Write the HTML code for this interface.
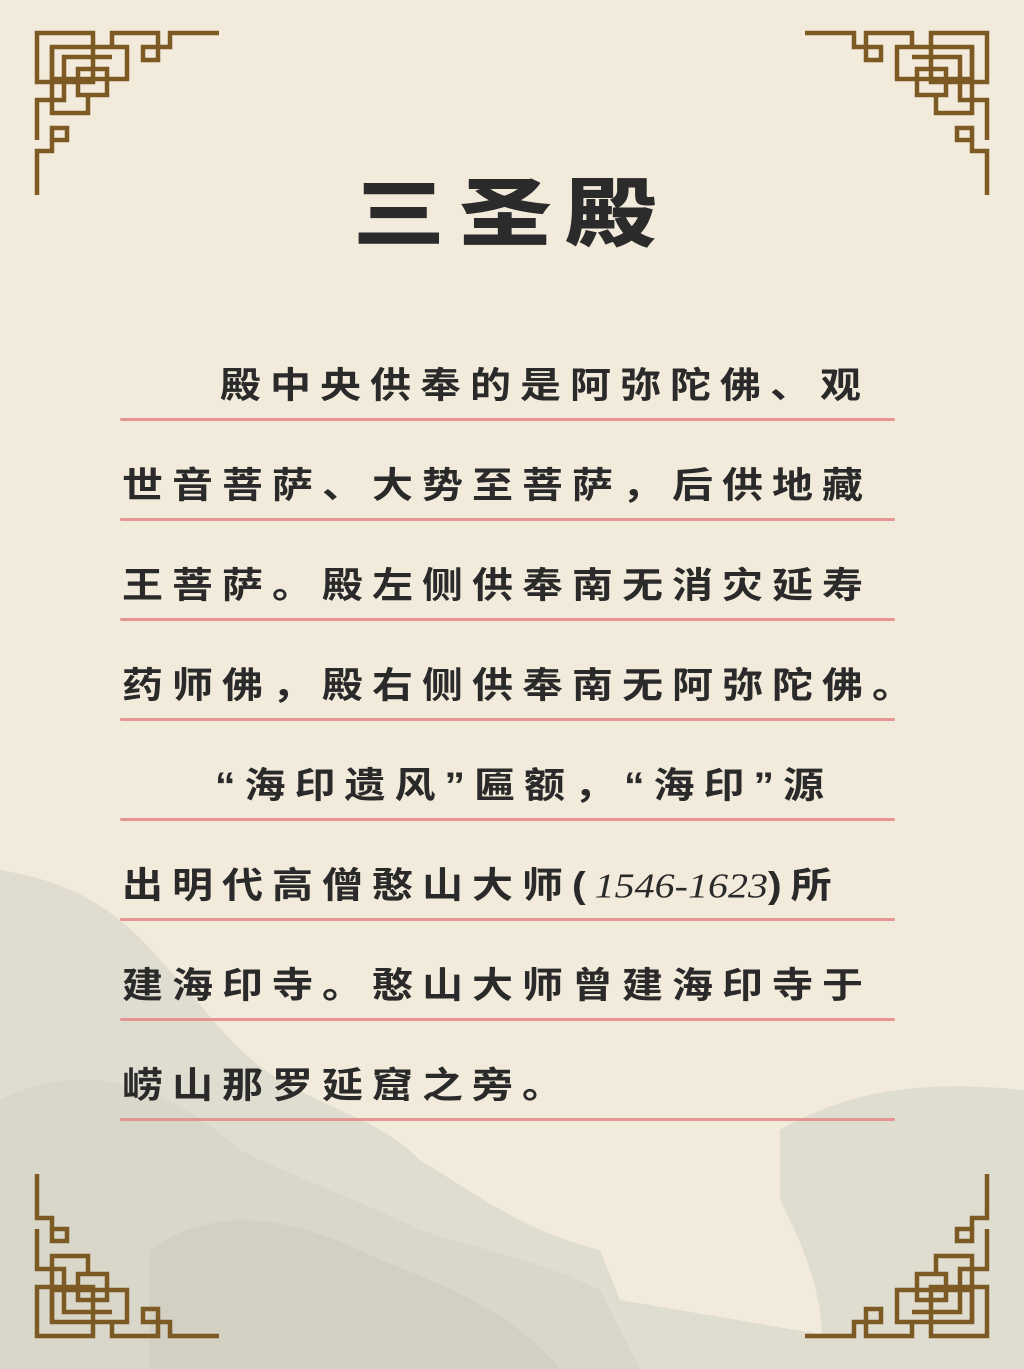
<!DOCTYPE html>
<html><head><meta charset="utf-8"><style>
html,body{margin:0;padding:0}
body{width:1024px;height:1369px;position:relative;overflow:hidden;background:#f2ebdb;font-family:"Liberation Sans","Noto Sans CJK SC",sans-serif}
.bg{position:absolute;left:0;top:0}
.title{position:absolute;left:0;width:1024px;top:160px;text-align:center;font-size:92px;font-weight:900;color:#2b2b2b;letter-spacing:14px;line-height:110px;transform:scaleY(0.82);font-family:"Liberation Sans","Noto Sans CJK SC",sans-serif}
.ln{position:absolute;left:122px;font-size:41px;font-weight:700;color:#2a2a2a;letter-spacing:9px;white-space:nowrap;line-height:50px;transform:scaleY(0.88);transform-origin:left center}
.rule{position:absolute;left:120px;width:775px;height:3px;background:#e38c8c;border-radius:2px;opacity:.9}
.num{font-family:"Liberation Serif",serif;font-style:italic;font-weight:400;letter-spacing:0;font-size:40px}
</style></head><body>
<svg class="bg" width="1024" height="1369" viewBox="0 0 1024 1369">
<g fill="#c9ccc4" opacity="0.45">
<path d="M0,870 C60,880 110,900 160,960 C200,1000 230,1050 280,1080 C330,1110 380,1120 420,1160 C470,1190 520,1230 600,1250 L620,1300 L1024,1369 L0,1369Z"/>
<path d="M0,1100 C80,1060 160,1080 240,1150 C300,1180 360,1200 420,1230 C480,1250 540,1260 600,1290 L640,1369 L0,1369Z" fill="#b9bfb6"/>
<path d="M780,1130 C850,1090 920,1080 1024,1090 L1024,1369 L820,1369 C830,1300 800,1240 780,1200Z"/>
<path d="M150,1250 C220,1200 300,1220 380,1260 C460,1290 520,1320 560,1369 L150,1369Z" fill="#aab1a8"/>
</g>
<g fill="none" stroke="#7d5a24" stroke-width="4.5" id="c">
<rect x="37" y="33" width="56" height="49"/>
<rect x="52" y="47" width="75" height="32"/>
<path d="M112,47 V33 H158 V47 H170 V33 H219"/>
<rect x="143" y="47" width="15" height="13"/>
<rect x="78" y="69" width="29" height="26"/>
<path d="M112,57 H64 V100 H52"/>
<path d="M52,47 V113 H88 V95"/>
<path d="M37,195 V151 H52 V140 M37,140 V100 H52"/>
<rect x="52" y="128" width="15" height="12"/>
</g>
<use href="#c" transform="translate(1024,0) scale(-1,1)"/>
<use href="#c" transform="translate(0,1369) scale(1,-1)"/>
<use href="#c" transform="translate(1024,1369) scale(-1,-1)"/>
</svg>
<div class="title">三圣殿</div>

<div class="ln" style="top:360px;left:220px">殿中央供奉的是阿弥陀佛、观</div>
<div class="rule" style="top:418px"></div>
<div class="ln" style="top:460px">世音菩萨、大势至菩萨，后供地藏</div>
<div class="rule" style="top:518px"></div>
<div class="ln" style="top:560px">王菩萨。殿左侧供奉南无消灾延寿</div>
<div class="rule" style="top:618px"></div>
<div class="ln" style="top:660px">药师佛，殿右侧供奉南无阿弥陀佛。</div>
<div class="rule" style="top:718px"></div>
<div class="ln" style="top:760px;left:215px">“海印遗风”匾额，“海印”源</div>
<div class="rule" style="top:818px"></div>
<div class="ln" style="top:860px">出明代高僧憨山大师(<span class="num">1546-1623</span>)所</div>
<div class="rule" style="top:918px"></div>
<div class="ln" style="top:960px">建海印寺。憨山大师曾建海印寺于</div>
<div class="rule" style="top:1018px"></div>
<div class="ln" style="top:1060px">崂山那罗延窟之旁。</div>
<div class="rule" style="top:1118px"></div>
</body></html>
